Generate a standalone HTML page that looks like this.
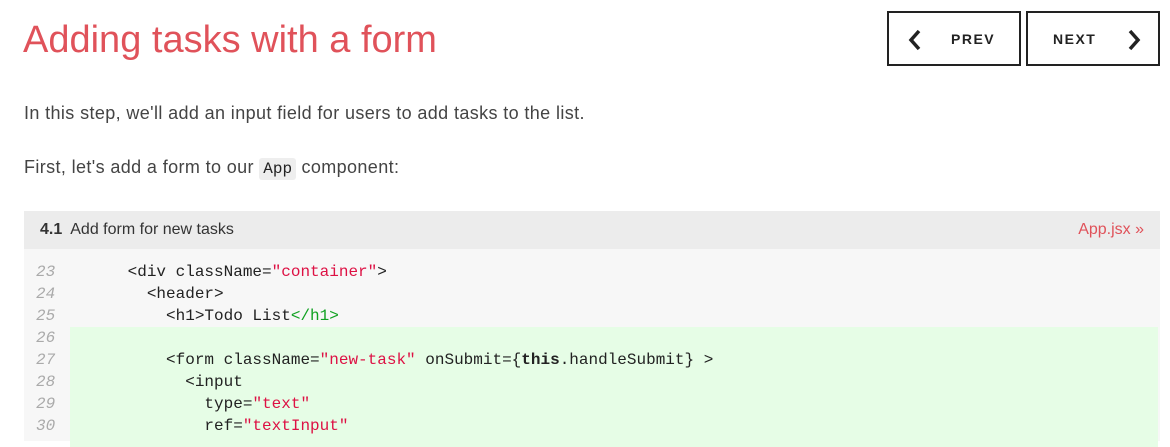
<!DOCTYPE html>
<html><head><meta charset="utf-8"><style>
body{margin:0;width:1170px;height:427px;overflow:hidden;background:#fff;font-family:"Liberation Sans",sans-serif;position:relative}
h1{position:absolute;left:23px;top:14px;margin:0;font-weight:normal;font-size:38px;color:#e0525a;letter-spacing:0px;line-height:52px}
.btn{position:absolute;top:11px;width:130px;height:51px;border:2px solid #222;box-sizing:content-box;font-weight:bold;font-size:14px;letter-spacing:1.5px;color:#222}
.btn span{position:absolute;top:18px}
.btn svg{position:absolute;top:16px}
p{position:absolute;left:24px;margin:0;font-size:18px;letter-spacing:0.38px;color:#444}
code{font-family:"Liberation Mono",monospace;background:#eee;border-radius:3px;padding:2px 4px;font-size:16px;letter-spacing:0;color:#222}
.box{position:absolute;left:24px;top:211px;width:1136px;height:230px;background:#f7f7f7}
.hd{height:38px;background:#ececec;font-size:16px;color:#333;line-height:38px;padding-left:16px;position:relative}
.hd a{position:absolute;right:16px;top:0;color:#e0525a;text-decoration:none}
.ln{position:absolute;left:12px;font-family:"Liberation Mono",monospace;font-style:italic;color:#aaa;font-size:16px}
.cd{position:absolute;left:46px;white-space:pre;font-family:"Liberation Mono",monospace;font-size:16px;color:#222}
.s{color:#dd1144}.g{color:#11a122}
.green{position:absolute;left:46px;top:116px;width:1088px;height:120px;background:#e6fde6}
</style></head><body>
<h1>Adding tasks with a form</h1>
<div class="btn" style="left:887px"><svg width="16" height="22" viewBox="0 0 16 22" style="left:18px"><path d="M12 2 L4 11 L12 20" fill="none" stroke="#222" stroke-width="3.5"/></svg><span style="left:62px">PREV</span></div>
<div class="btn" style="left:1026px"><span style="left:25px">NEXT</span><svg width="16" height="22" viewBox="0 0 16 22" style="left:98px"><path d="M4 2 L12 11 L4 20" fill="none" stroke="#222" stroke-width="3.5"/></svg></div>
<p style="top:103px">In this step, we'll add an input field for users to add tasks to the list.</p>
<p style="top:157px">First, let's add a form to our <code>App</code> component:</p>
<div class="box">
<div class="hd"><b>4.1</b>&nbsp; Add form for new tasks<a>App.jsx »</a></div>
<div class="green"></div>
<div class="ln" style="top:50px;line-height:22px">23<br>24<br>25<br>26<br>27<br>28<br>29<br>30</div>
<div class="cd" style="top:50px;line-height:22px">      &lt;div className=<span class="s">"container"</span>&gt;
        &lt;header&gt;
          &lt;h1&gt;Todo List<span class="g">&lt;/h1&gt;</span>

          &lt;form className=<span class="s">"new-task"</span> onSubmit={<b>this</b>.handleSubmit} &gt;
            &lt;input
              type=<span class="s">"text"</span>
              ref=<span class="s">"textInput"</span></div>
</div>
</body></html>
